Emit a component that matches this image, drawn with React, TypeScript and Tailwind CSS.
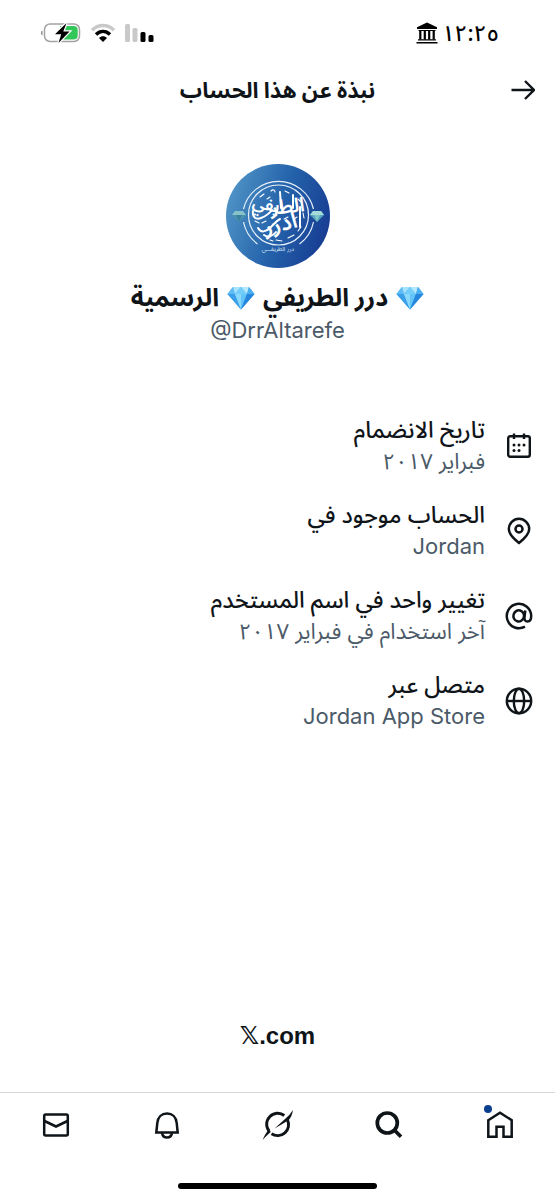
import type { ReactNode } from "react";

const FONT = "font-[Inter,'Noto_Sans_Arabic','DejaVu_Sans',sans-serif]";

interface Detail {
  title: string;
  value: string;
  icon: ReactNode;
}

function BatteryIcon() {
  return (
    <svg width="42" height="22" viewBox="0 0 42 22" fill="none">
      <path d="M2.5 8.5C1.2 9 1 9.8 1 11s.2 2 1.5 2.500z" fill="#8e8e8e" />
      <rect x="4.500" y="2" width="35" height="17.500" rx="5.500" stroke="#a3a3a3" strokeWidth="1.500" />
      <path d="M20 4h13.500c2.800 0 4.200 1.500 4.200 4v5.500c0 2.500-1.400 4-4.200 4H20z" fill="#33c759" />
      <path d="M26.500 1 15 12.200h6.200L18.500 21 29.500 9.600h-6.200z" fill="#000" stroke="#fff" strokeWidth="2.500" paintOrder="stroke" />
    </svg>
  );
}

function WifiIcon() {
  return (
    <svg width="26" height="20" viewBox="0 0 26 20" fill="none">
      <path d="M2 7.200C8.300 1 17.700 1 24 7.200" stroke="#c9c9c9" strokeWidth="3.400" />
      <path d="M6 11.500c4.200-4 9.800-4 14 0" stroke="#000" strokeWidth="3.400" />
      <path d="M9 15c2.400-2.200 5.600-2.200 8 0l-4 4z" fill="#000" />
    </svg>
  );
}

function SignalIcon() {
  return (
    <svg width="30" height="20" viewBox="0 0 30 20">
      <rect x="1" y="1" width="5" height="18" rx="1.500" fill="#c9c9c9" />
      <rect x="8.500" y="5" width="5" height="14" rx="1.500" fill="#c9c9c9" />
      <rect x="16.500" y="9" width="5" height="10" rx="1.500" fill="#000" />
      <rect x="24.500" y="12" width="5" height="7" rx="1.500" fill="#000" />
    </svg>
  );
}

function BankIcon() {
  return (
    <svg width="22" height="22" viewBox="0 0 22 22" fill="#000">
      <path d="M11 .5 21 5.300v1.700H1V5.300z" />
      <path d="M2.500 8h17v1h-17zM2 17.300h18v1.200H2zM.5 20h21v1.500H.5z" />
      <path d="M3.200 8h2.200v9.500H3.200zM7.700 8h2.200v9.500H7.700zM12.100 8h2.200v9.500h-2.200zM16.600 8h2.200v9.500h-2.200z" />
    </svg>
  );
}

function Diamond({ className }: { className?: string }) {
  return (
    <svg className={className} viewBox="0 0 28 24">
      <path d="M6 1h16l5.500 7L14 23.500.5 8z" fill="#3ba5ee" />
      <path d="M6 1 .5 8H8z" fill="#5cbcf5" />
      <path d="M6 1 8 8l6-7z" fill="#a9e2fc" />
      <path d="m14 1-6 7h12z" fill="#72cdf9" />
      <path d="m14 1 6 7 2-7z" fill="#b5e8fd" />
      <path d="m22 1-2 7h7.500z" fill="#4aaef0" />
      <path d="M.5 8H8l6 15.500z" fill="#3c9fea" />
      <path d="M8 8h12l-6 15.500z" fill="#62c4f8" />
      <path d="M20 8h7.500L14 23.500z" fill="#2686dc" />
      <path d="m8 8 6 15.500L14 8z" fill="#8ad8fb" />
    </svg>
  );
}

function Avatar() {
  return (
    <svg className="size-26" viewBox="0 0 104 104" role="img" aria-label="درر الطريفي">
      <defs>
        <linearGradient id="avatar-bg" x1="0" y1="0.350" x2="1" y2="0.650">
          <stop offset="0" stopColor="#4f93c6" />
          <stop offset="0.500" stopColor="#2563ab" />
          <stop offset="1" stopColor="#173c92" />
        </linearGradient>
      </defs>
      <circle cx="52" cy="52" r="52" fill="url(#avatar-bg)" />
      <g fill="none" stroke="#e8f1fa">
        <circle cx="52.500" cy="51" r="30" strokeWidth="1.200" />
        <path d="M17.500 45a36 36 0 0 1 70 0M17.500 58a36 36 0 0 0 14 22M87.500 58a36 36 0 0 1-14 22" strokeWidth="1.200" />
      </g>
      <g fill="#fff" textAnchor="middle" fontWeight="600" direction="rtl">
        <text x="39" y="46" fontSize="17" transform="rotate(12 39 46)">يفي</text>
        <text x="62" y="49" fontSize="20" transform="rotate(-6 62 49)">الطر</text>
        <text x="56" y="67" fontSize="22" transform="rotate(-14 56 67)">ادرر</text>
      </g>
      <g fill="none" stroke="#fff" strokeWidth="2" strokeLinecap="round">
        <path d="M27 47c-1 6 3 9 8 7s8-4 11-8M32 64c3 5 8 4 12 0s6-7 10-9M38 71c4 3 9 1 12-3M74 43v20M54 28l1 16M67 31v13" />
      </g>
      <g fill="none" stroke="#fff" strokeWidth="1.100" strokeLinecap="round">
        <path d="M34 33l4-3M45 27c2-2 4-1 4 1M59 27l4 2M72 35l3 3M77 49l1 5M29 57l4 2M36 59l4-2M50 76l6 1M62 74l6-3M72 67l3-4M41 35l3-2M58 55l4-2M68 55l3-2M44 76l3 1M47 60l3-1" />
      </g>
      <text x="52" y="87" fontSize="6" fill="#dce9f7" textAnchor="middle" direction="rtl">درر الطريفـــي</text>
      <g transform="translate(6 47)">
        <path d="M3 0h8l3 4-7 7-7-7z" fill="#4b94ae" />
        <path d="M3 0 0 4h14L11 0z" fill="#86c2c8" />
        <path d="m4 4 3 7 3-7" fill="#3b7fa3" />
      </g>
      <g transform="translate(84 47)">
        <path d="M3 0h8l3 4-7 7-7-7z" fill="#57a3b9" />
        <path d="M3 0 0 4h14L11 0z" fill="#a5dbd8" />
        <path d="m4 4 3 7 3-7" fill="#7dc4cb" />
      </g>
    </svg>
  );
}

const details: Detail[] = [
  {
    title: "تاريخ الانضمام",
    value: "فبراير ٢٠١٧",
    icon: (
      <svg className="size-7" viewBox="0 0 28 28" fill="none" stroke="currentColor" strokeWidth="2.400">
        <rect x="3.200" y="4.200" width="21.600" height="20.600" rx="2" />
        <path d="M9 1.500V7M19 1.500V7" />
        <g fill="currentColor" stroke="none">
          <circle cx="9" cy="13" r="1.500" />
          <circle cx="14" cy="13" r="1.500" />
          <circle cx="19" cy="13" r="1.500" />
          <circle cx="9" cy="18.500" r="1.500" />
          <circle cx="14" cy="18.500" r="1.500" />
        </g>
      </svg>
    ),
  },
  {
    title: "الحساب موجود في",
    value: "Jordan",
    icon: (
      <svg className="size-7" viewBox="0 0 28 28" fill="none" stroke="currentColor" strokeWidth="2.500">
        <path d="M14 26C9 22 3.800 17.500 3.800 12a10.200 10.200 0 0 1 20.400 0c0 5.500-5.200 10-10.200 14z" />
        <circle cx="14" cy="12" r="3.500" />
      </svg>
    ),
  },
  {
    title: "تغيير واحد في اسم المستخدم",
    value: "آخر استخدام في فبراير ٢٠١٧",
    icon: (
      <svg className="size-7" viewBox="0 0 28 28" fill="none" stroke="currentColor" strokeWidth="2.500">
        <path d="M20 24.700A12.200 12.200 0 1 1 26.200 14c0 3.500-1.200 5.500-3.700 5.500-2.300 0-3.300-1.700-3-4.200l.8-6.800" />
        <ellipse cx="13.700" cy="14" rx="5.300" ry="5.600" transform="rotate(15 14 14)" />
      </svg>
    ),
  },
  {
    title: "متصل عبر",
    value: "Jordan App Store",
    icon: (
      <svg className="size-7" viewBox="0 0 28 28" fill="none" stroke="currentColor" strokeWidth="2.400">
        <circle cx="14" cy="14" r="12.200" />
        <ellipse cx="14" cy="14" rx="5.200" ry="12.200" />
        <path d="M2 14h24" />
      </svg>
    ),
  },
];

const tabs = [
  {
    label: "الرئيسية",
    icon: (
      <svg className="size-8" viewBox="0 0 32 32" fill="none" stroke="currentColor" strokeWidth="2.500">
        <path d="M4.300 11.200 16 3.700l11.700 7.500v16.500h-8.200v-10h-7v10H4.300z" />
      </svg>
    ),
  },
  {
    label: "بحث",
    icon: (
      <svg className="size-8" viewBox="0 0 32 32" fill="none" stroke="currentColor" strokeWidth="3.700">
        <circle cx="14.300" cy="14" r="10" />
        <path d="m21.300 21 6.700 6.700" />
      </svg>
    ),
  },
  {
    label: "Grok",
    icon: (
      <svg className="size-8" viewBox="0 0 32 32" fill="none">
        <path d="M22.300 6.500A11 11 0 0 0 7.200 22.300" stroke="currentColor" strokeWidth="2.900" />
        <path d="M9.500 24.800a11 11 0 0 0 16-14" stroke="currentColor" strokeWidth="2.900" />
        <path d="M12.500 19.500 22.500 10.500Q28 6 31 1q-1 6.500-4.500 10.500L24.500 12.500q-5 3-12 7z" fill="currentColor" />
        <path d="m6 21.200 3 1.500Q4.500 26.500.5 31q2-5 5.500-9.800z" fill="currentColor" />
      </svg>
    ),
  },
  {
    label: "الإشعارات",
    icon: (
      <svg className="size-8" viewBox="0 0 32 32" fill="none" stroke="currentColor" strokeWidth="2.500">
        <path d="M6.300 14C6.800 8.200 10.600 4.500 16 4.500s9.200 3.700 9.700 9.500l1 9.500H5.300z" />
        <path d="M11 24c.5 3 2.300 4.500 5 4.500s4.500-1.500 5-4.500" />
      </svg>
    ),
  },
  {
    label: "الرسائل",
    icon: (
      <svg className="size-8" viewBox="0 0 32 32" fill="none" stroke="currentColor" strokeWidth="2.500">
        <rect x="4.200" y="5.500" width="23.600" height="21" rx="1.500" />
        <path d="m4.500 12 11.500 5.500L27.500 12" />
      </svg>
    ),
  },
];

export default function App() {
  return (
    <div dir="rtl" className={`flex min-h-screen flex-col bg-white text-[#0f1419] ${FONT}`}>
      <div className="flex h-[66px] items-center justify-between px-14">
        <div className="flex items-center gap-1 text-black">
          <span className="text-[22px] font-medium">١٢:٢٥</span>
          <BankIcon />
        </div>
        <div dir="ltr" className="-ml-4 flex items-center gap-2">
          <BatteryIcon />
          <WifiIcon />
          <SignalIcon />
        </div>
      </div>

      <header className="grid h-12 grid-cols-[32px_1fr_32px] items-center px-4">
        <button type="button" aria-label="رجوع" className="flex size-8 items-center justify-center">
          <svg className="size-6" viewBox="0 0 24 24" fill="none" stroke="currentColor" strokeWidth="2.400">
            <path d="M.5 12h22M14 3l9 9-9 9" />
          </svg>
        </button>
        <h1 className="text-center text-[22px] font-bold">نبذة عن هذا الحساب</h1>
      </header>

      <main className="flex grow flex-col">
        <section className="flex flex-col items-center pt-[50px]">
          <Avatar />
          <h2 className="mt-3 flex h-9 items-center gap-2 text-[25px] font-bold">
            <Diamond className="h-6 w-7" />
            <span>درر الطريفي</span>
            <Diamond className="h-6 w-7" />
            <span>الرسمية</span>
          </h2>
          <p dir="ltr" className="text-[22px] leading-7 text-[#4b5a68]">@DrrAltarefe</p>
        </section>

        <ul className="mt-[71px] flex flex-col gap-6 px-[22px]">
          {details.map((item) => (
            <li key={item.title} className="flex items-center gap-5">
              {item.icon}
              <div>
                <p className="text-[23px] leading-[31px] font-medium">{item.title}</p>
                <p className="text-[22px] leading-[30px] text-[#4b5a68]">{item.value}</p>
              </div>
            </li>
          ))}
        </ul>

        <p dir="ltr" className="mt-auto pb-10 text-center font-['Liberation_Sans','DejaVu_Sans',sans-serif] text-2xl leading-8 font-bold">
          𝕏.com
        </p>
      </main>

      <nav className="border-t border-[#d5d9dd]">
        <div className="grid h-16 grid-cols-5">
          {tabs.map((tab, i) => (
            <button key={tab.label} type="button" aria-label={tab.label} className="flex items-center justify-center">
              <span className="relative">
                {tab.icon}
                {i === 0 && <span className="absolute -top-1 left-0 size-2 rounded-full bg-[#0a3f8f]" />}
              </span>
            </button>
          ))}
        </div>
        <div className="flex h-[43px] items-end justify-center pb-[11px]">
          <div className="h-1.5 w-9/25 rounded-full bg-black" />
        </div>
      </nav>
    </div>
  );
}
